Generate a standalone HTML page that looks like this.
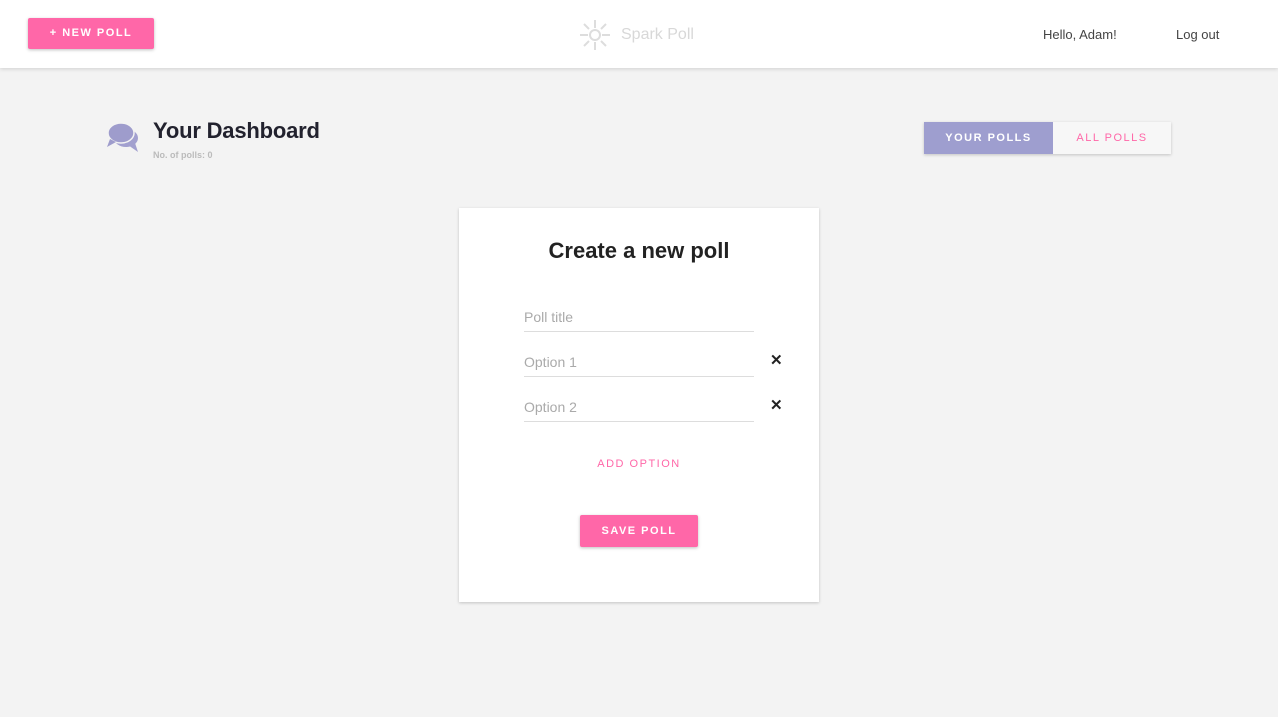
<!DOCTYPE html>
<html><head><style>
*{box-sizing:border-box;margin:0;padding:0}
body{width:1278px;height:717px;background:#f3f3f3;font-family:"Liberation Sans",sans-serif;position:relative;overflow:hidden}
.hdr{position:absolute;left:0;top:0;width:1278px;height:68px;background:#fff;box-shadow:0 1px 4px rgba(0,0,0,.15)}
.btn{position:absolute;background:#ff67a8;color:#fff;font-weight:bold;font-size:11px;letter-spacing:1.5px;text-align:center;border-radius:2px;box-shadow:0 1px 3px rgba(0,0,0,.25)}
.abs{position:absolute}
</style></head><body>
<div class="hdr">
 <div class="btn" style="left:28px;top:18px;width:126px;height:31px;line-height:31px">+ NEW POLL</div>
 <svg class="abs" style="left:579px;top:19px" width="32" height="32" viewBox="0 0 32 32" stroke="#ddd" stroke-width="2" fill="none">
  <circle cx="16" cy="16" r="5"/>
  <path d="M16 1v8M16 23v8M1 16h8M23 16h8M5 5l5 5M22 22l5 5M27 5l-5 5M10 22l-5 5"/>
 </svg>
 <div class="abs" style="left:621px;top:26px;font-size:16px;color:#d8d8d8">Spark Poll</div>
 <div class="abs" style="left:1043px;top:27px;font-size:13px;color:#444">Hello, Adam!</div>
 <div class="abs" style="left:1176px;top:27px;font-size:13px;color:#444">Log out</div>
</div>
<svg class="abs" style="left:106px;top:121px" width="34" height="32" viewBox="0 0 34 32">
 <ellipse cx="20" cy="17" rx="12" ry="9" fill="#a2a0cf"/><path d="M22 24l10 7-3-9z" fill="#a2a0cf"/>
 <ellipse cx="15" cy="12" rx="13" ry="10" fill="#9e9ccc" stroke="#f3f3f3" stroke-width="1.5"/><path d="M4 18l-3 8 9-5z" fill="#9e9ccc"/>
</svg>
<div class="abs" style="left:153px;top:118px;font-size:22px;font-weight:bold;color:#22222e;letter-spacing:-0.2px">Your Dashboard</div>
<div class="abs" style="left:153px;top:150px;font-size:9px;font-weight:bold;color:#bbb">No. of polls: 0</div>
<div class="abs" style="left:924px;top:122px;width:247px;height:32px;box-shadow:0 1px 3px rgba(0,0,0,.2);font-size:11px;font-weight:bold;letter-spacing:1.5px;line-height:32px;text-align:center">
 <div class="abs" style="left:0;top:0;width:129px;height:32px;background:#9e9ecf;color:#fff">YOUR POLLS</div>
 <div class="abs" style="left:129px;top:0;width:118px;height:32px;background:#f7f7f7;color:#ff67a8;font-weight:normal">ALL POLLS</div>
</div>
<div class="abs" style="left:459px;top:208px;width:360px;height:394px;background:#fff;box-shadow:0 1px 3px rgba(0,0,0,.2)">
 <div class="abs" style="left:0;top:30px;width:360px;text-align:center;font-size:22px;font-weight:bold;color:#222">Create a new poll</div>
 <div class="abs" style="left:65px;top:100px;width:230px;height:24px;border-bottom:1px solid #ddd;font-size:14px;color:#aaa;padding-top:1px">Poll title</div>
 <div class="abs" style="left:65px;top:145px;width:230px;height:24px;border-bottom:1px solid #ddd;font-size:14px;color:#aaa;padding-top:1px">Option 1</div>
 <div class="abs" style="left:65px;top:190px;width:230px;height:24px;border-bottom:1px solid #ddd;font-size:14px;color:#aaa;padding-top:1px">Option 2</div>
 <div class="abs" style="left:311px;top:143px;font-size:15px;font-weight:bold;color:#222">✕</div>
 <div class="abs" style="left:311px;top:188px;font-size:15px;font-weight:bold;color:#222">✕</div>
 <div class="abs" style="left:0;top:250px;width:360px;text-align:center;font-size:11px;letter-spacing:1.5px;color:#ff67a8">ADD OPTION</div>
 <div class="btn" style="left:121px;top:307px;width:118px;height:32px;line-height:32px">SAVE POLL</div>
</div>
</body></html>
